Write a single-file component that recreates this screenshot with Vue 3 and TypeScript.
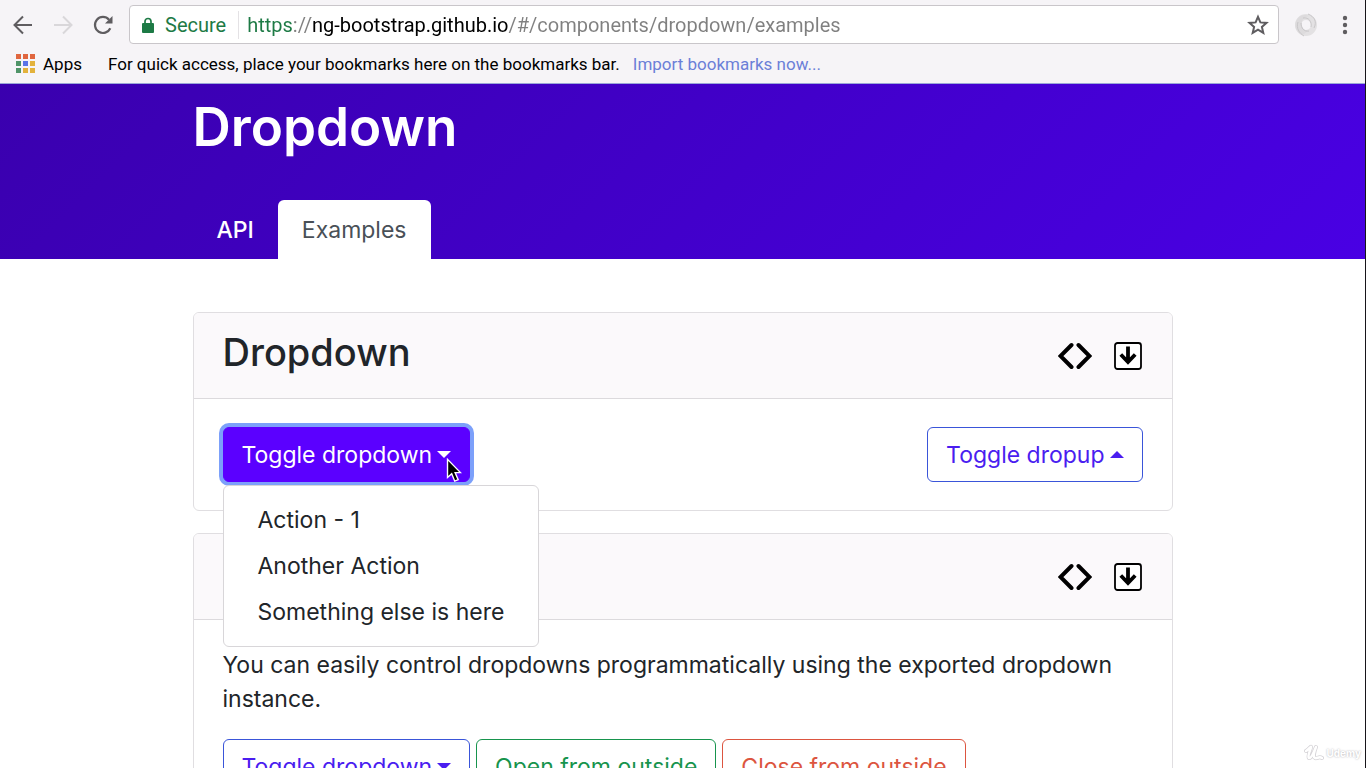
<script setup lang="ts">
import { ref } from 'vue'

interface OutlineButton {
  label: string
  tone: 'primary' | 'success' | 'danger'
  caret: boolean
}

const url = ref('https://ng-bootstrap.github.io/#/components/dropdown/examples')
const menuOpen = ref(true)
const actions: string[] = ['Action - 1', 'Another Action', 'Something else is here']
const manualButtons: OutlineButton[] = [
  { label: 'Toggle dropdown', tone: 'primary', caret: true },
  { label: 'Open from outside', tone: 'success', caret: false },
  { label: 'Close from outside', tone: 'danger', caret: false },
]
const appColors: string[] = [
  '#e0663f', '#e0663f', '#e0663f',
  '#4f9468', '#5b74e8', '#e3b23c',
  '#4f9468', '#e3b23c', '#e3b23c',
]
</script>

<template>
  <div class="window">
    <header class="chrome">
      <div class="toolbar">
        <button class="nav-btn" type="button" aria-label="Back">
          <svg width="20" height="20" viewBox="0 0 20 20" fill="none" stroke="#5f5d60" stroke-width="2">
            <path d="M19 10H2M10 1.500L1.500 10L10 18.500" />
          </svg>
        </button>
        <button class="nav-btn" type="button" aria-label="Forward">
          <svg width="20" height="20" viewBox="0 0 20 20" fill="none" stroke="#d9d7da" stroke-width="2">
            <path d="M1 10H18M10 1.500L18.500 10L10 18.500" />
          </svg>
        </button>
        <button class="nav-btn" type="button" aria-label="Reload">
          <svg width="20" height="20" viewBox="0 0 20 20">
            <path d="M17.300 13.200A8 8 0 1 1 16 4.700" fill="none" stroke="#5f5d60" stroke-width="2.200" />
            <path d="M19.500 1V8.500H12Z" fill="#5f5d60" />
          </svg>
        </button>
        <div class="omnibox">
          <svg class="lock" width="12" height="16" viewBox="0 0 12 16">
            <path d="M3 7V4.500a3 3 0 0 1 6 0V7" fill="none" stroke="#1d7a45" stroke-width="1.700" />
            <rect y="6" width="12" height="10" rx="1" fill="#1d7a45" />
          </svg>
          <span class="secure">Secure</span>
          <input v-model="url" class="url" type="text" aria-label="Address" spellcheck="false" />
          <button class="star" type="button" aria-label="Bookmark this page">
            <svg width="22" height="22" viewBox="0 0 22 22" fill="none" stroke="#5f5d60" stroke-width="2">
              <path d="M11 2.800L13.400 8.400L19.500 8.900L14.900 12.900L16.300 18.900L11 15.700L5.700 18.900L7.100 12.900L2.500 8.900L8.600 8.400Z" />
            </svg>
          </button>
        </div>
        <button class="extension" type="button" aria-label="Extension">
          <svg width="24" height="24" viewBox="0 0 24 24" fill="none">
            <circle cx="12" cy="12" r="8" stroke="#e3e1e3" stroke-width="6" />
            <path d="M8 22C1 18 -1 11 4 5C7 2 11 1 15 3C9 4 7 8 8 13C9 17 12 18 14 17C12 20 10 21 8 22Z" fill="#dddbdd" />
            <path d="M14 1C21 4 23 9 20 15M10 23C5 20 2 15 4 9M9 5C15 4 18 9 17 14M15 18C10 19 7 15 7 10" stroke="#c9c7c9" />
          </svg>
        </button>
        <button class="more" type="button" aria-label="Menu">
          <svg width="6" height="20" viewBox="0 0 6 20" fill="#5f5d60">
            <circle cx="3" cy="3" r="2.200" /><circle cx="3" cy="10" r="2.200" /><circle cx="3" cy="17" r="2.200" />
          </svg>
        </button>
      </div>
      <nav class="bookmarks" aria-label="Bookmarks">
        <button class="apps" type="button">
          <span class="grid"><i v-for="(c, i) in appColors" :key="i" :style="{ background: c }"></i></span>
          Apps
        </button>
        <span class="hint">For quick access, place your bookmarks here on the bookmarks bar.</span>
        <a class="import" href="#">Import bookmarks now...</a>
      </nav>
    </header>

    <section class="hero">
      <div class="container">
        <h1>Dropdown</h1>
        <nav class="tabs" aria-label="Sections">
          <a class="tab" href="#api">API</a>
          <a class="tab active" href="#examples" aria-current="page">Examples</a>
        </nav>
      </div>
    </section>

    <main class="container examples">
      <article class="card">
        <header class="card-head">
          <h2>Dropdown</h2>
          <div class="tools">
            <button type="button" aria-label="Show code">
              <svg width="34" height="28" viewBox="0 0 34 28" fill="none" stroke="#000" stroke-width="4" stroke-linecap="round">
                <path d="M13.500 3L2.500 14L13.500 25M20.500 3L31.500 14L20.500 25" />
              </svg>
            </button>
            <button type="button" aria-label="Download">
              <svg width="28" height="28" viewBox="0 0 28 28" fill="none" stroke="#000">
                <rect x="1" y="1" width="26" height="26" rx="2.500" fill="#fff" stroke-width="1.800" />
                <path d="M14 4.500V21M6.800 12.500L14 20L21.200 12.500" stroke-width="3.800" />
              </svg>
            </button>
          </div>
        </header>
        <div class="card-body spread">
          <div class="dropdown">
            <button class="btn solid" type="button" :aria-expanded="menuOpen" @click="menuOpen = !menuOpen">
              Toggle dropdown<span class="caret down"></span>
            </button>
            <svg class="pointer" width="16" height="25" viewBox="0 0 17 27">
              <path d="M1.500 1.500V21L6 17L9.300 25L13 23.400L9.700 15.800H15.500Z" fill="#000" stroke="#fff" stroke-width="1.500" />
            </svg>
            <div v-if="menuOpen" class="menu">
              <button v-for="a in actions" :key="a" class="item" type="button">{{ a }}</button>
            </div>
          </div>
          <button class="btn primary" type="button">Toggle dropup<span class="caret up"></span></button>
        </div>
      </article>

      <article class="card">
        <header class="card-head">
          <div class="tools">
            <button type="button" aria-label="Show code">
              <svg width="34" height="28" viewBox="0 0 34 28" fill="none" stroke="#000" stroke-width="4" stroke-linecap="round">
                <path d="M13.500 3L2.500 14L13.500 25M20.500 3L31.500 14L20.500 25" />
              </svg>
            </button>
            <button type="button" aria-label="Download">
              <svg width="28" height="28" viewBox="0 0 28 28" fill="none" stroke="#000">
                <rect x="1" y="1" width="26" height="26" rx="2.500" fill="#fff" stroke-width="1.800" />
                <path d="M14 4.500V21M6.800 12.500L14 20L21.200 12.500" stroke-width="3.800" />
              </svg>
            </button>
          </div>
        </header>
        <div class="card-body">
          <p>You can easily control dropdowns programmatically using the exported dropdown instance.</p>
          <div class="row">
            <button v-for="b in manualButtons" :key="b.label" class="btn" :class="b.tone" type="button">
              {{ b.label }}<span v-if="b.caret" class="caret down"></span>
            </button>
          </div>
        </div>
      </article>
    </main>

    <div class="watermark">
      <svg width="20" height="18" viewBox="0 0 20 18" fill="none" stroke-linecap="round" stroke-linejoin="round">
        <path d="M2 7C5 5 7 2 7 3C7 5 3 12 5 14C7 15 10 8 12 3C10 8 9 13 11 14C13 15 15 12 18 14" stroke="#d5d3d7" stroke-width="4" />
        <path d="M2 7C5 5 7 2 7 3C7 5 3 12 5 14C7 15 10 8 12 3C10 8 9 13 11 14C13 15 15 12 18 14" stroke="#fff" stroke-width="2.500" />
      </svg>
      <span>Udemy</span>
    </div>
  </div>
</template>

<style>
body {
  margin: 0;
}
</style>

<style scoped>
* {
  box-sizing: border-box;
}

.window {
  position: relative;
  height: 100vh;
  overflow: hidden;
  background: #fff;
  border-right: 1px solid #17151a;
  color: #212529;
  font-family: Inter, 'Liberation Sans', sans-serif;
  font-size: 23px;
  line-height: 34px;
}

button {
  padding: 0;
  border: 0;
  background: none;
  color: inherit;
  font: inherit;
  cursor: pointer;
}

svg {
  display: block;
}

.chrome {
  background: #f6f4f7;
  border-bottom: 1px solid #9aa6d8;
  font-family: Roboto, sans-serif;
}

.toolbar {
  display: flex;
  align-items: center;
  padding: 5px 17px 0 13px;
}

.nav-btn {
  margin-right: 20px;
}

.nav-btn:nth-child(3) {
  margin-right: 16px;
}

.omnibox {
  display: flex;
  flex: 1;
  align-items: center;
  height: 39px;
  padding: 0 9px 0 12px;
  border: 1px solid #c9c6ca;
  border-radius: 4px;
  background: #fff;
  font-size: 20px;
}

.secure {
  margin: 0 12px 0 11px;
  color: #1d7a45;
}

.url {
  flex: 1;
  min-width: 0;
  height: 28px;
  padding: 0 0 0 8px;
  border: 0;
  border-left: 1px solid #e4e2e5;
  outline: 0;
  background: linear-gradient(90deg, #1d7a45 54px, #808080 54px 72px, #000 72px 269px, #808080 269px);
  background-clip: text;
  -webkit-background-clip: text;
  color: transparent;
  font: inherit;
}

.extension {
  margin-left: 15px;
}

.more {
  margin-left: 24px;
}

.bookmarks {
  display: flex;
  align-items: center;
  height: 39px;
  padding-left: 16px;
  color: #000;
  font-size: 17px;
}

.apps {
  display: flex;
  align-items: center;
  gap: 8px;
}

.grid {
  display: grid;
  grid-template-columns: repeat(3, 5px);
  gap: 2px;
}

.grid i {
  height: 5px;
}

.hint {
  margin: 0 13px 0 26px;
}

.import {
  color: #6b7fd7;
  text-decoration: none;
}

.container {
  width: 100%;
  max-width: 980px;
  margin: 0 auto;
}

.hero {
  padding-top: 11px;
  background: linear-gradient(135deg, #3a00ae, #4900e4);
}

h1 {
  margin: 0 0 41px;
  color: #fff;
  font-size: 53px;
  font-weight: 600;
  line-height: 64px;
}

.tabs {
  display: flex;
}

.tab {
  padding: 13px 24px 12px;
  border-radius: 6px 6px 0 0;
  color: #fff;
  font-weight: 500;
  text-decoration: none;
}

.tab.active {
  background: #fff;
  color: #495057;
  font-weight: 400;
}

.examples {
  display: grid;
  gap: 22px;
  padding-top: 53px;
}

.card {
  border: 1px solid #e0dee1;
  border-radius: 6px;
}

.card-head {
  display: flex;
  align-items: center;
  min-height: 86px;
  padding: 0 30px 0 29px;
  border-bottom: 1px solid #dcdadd;
  border-radius: 5px 5px 0 0;
  background: #fbf9fb;
}

h2 {
  margin: 0 0 8px;
  font-size: 38px;
  font-weight: 500;
  line-height: 44px;
}

.tools {
  display: flex;
  gap: 22px;
  margin-left: auto;
}

.card-body {
  padding: 28px 29px;
}

.spread {
  display: flex;
  justify-content: space-between;
}

.btn {
  display: flex;
  align-items: center;
  height: 55px;
  padding: 0 18px;
  border: 1px solid;
  border-radius: 6px;
  white-space: nowrap;
}

.solid {
  border-color: #5b00ff;
  background: #5b00ff;
  box-shadow: 0 0 0 4px #7ca0fa;
  color: #fff;
}

.primary {
  border-color: #3a55d9;
  color: #4a1df0;
}

.success {
  color: #17944d;
}

.danger {
  color: #dc5540;
}

.caret {
  margin-left: 5px;
  border: 7px solid transparent;
}

.down {
  border-top-color: currentColor;
  border-bottom: 0;
}

.up {
  border-bottom-color: currentColor;
  border-top: 0;
}

.dropdown {
  position: relative;
}

.menu {
  position: absolute;
  z-index: 2;
  top: 58px;
  left: 0;
  width: max-content;
  padding: 11px 0;
  border: 1px solid #d8d6d9;
  border-radius: 6px;
  background: #fff;
}

.item {
  display: block;
  width: 100%;
  padding: 6px 34px;
  text-align: left;
}

.pointer {
  position: absolute;
  z-index: 3;
  top: 31px;
  left: 223px;
}

p {
  margin: 0 0 23px;
}

.row {
  display: flex;
  gap: 6px;
}

.watermark {
  position: absolute;
  right: 4px;
  bottom: 5px;
  display: flex;
  align-items: center;
  gap: 2px;
  color: #fff;
  font-size: 10px;
  font-weight: 700;
  line-height: 20px;
  text-shadow: 0 0 2px #aaa8ad;
}
</style>
